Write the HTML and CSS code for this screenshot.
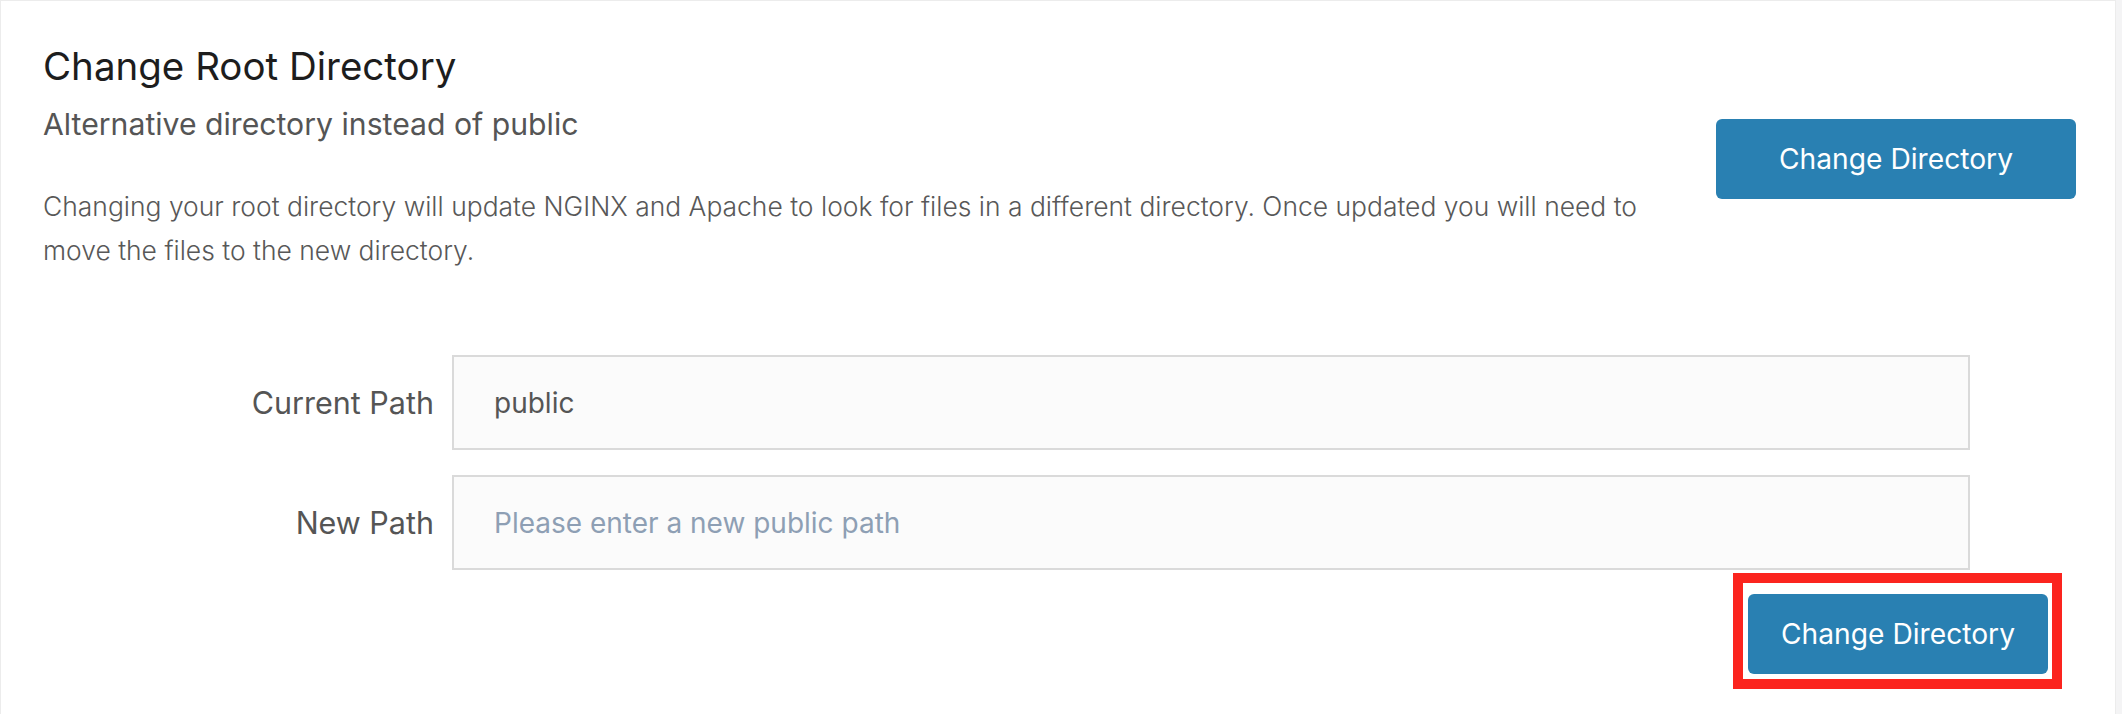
FILE: index.html
```html
<!DOCTYPE html>
<html lang="en">
<head>
<meta charset="utf-8">
<title>Change Root Directory</title>
<link rel="stylesheet" href="styles.css">
</head>
<body>
<div class="card">
  <section class="intro">
    <div class="intro-text">
      <h2 class="title">Change Root Directory</h2>
      <p class="subtitle">Alternative directory instead of public</p>
      <p class="desc">Changing your root directory will update NGINX and Apache to look for files in a different directory. Once updated you will need to move the files to the new directory.</p>
    </div>
    <button class="btn btn-top" type="button">Change Directory</button>
  </section>
  <form class="form">
    <div class="field">
      <label class="label" for="cur">Current Path</label>
      <input class="input" id="cur" type="text" value="public" readonly>
    </div>
    <div class="field">
      <label class="label" for="new">New Path</label>
      <input class="input" id="new" type="text" placeholder="Please enter a new public path">
    </div>
    <div class="actions">
      <button class="btn btn-submit highlighted" type="button">Change Directory</button>
    </div>
  </form>
</div>
</body>
</html>
```

FILE: styles.css
```css
html, body {
  margin: 0;
  padding: 0;
}
body {
  background: #f4f4f5;
  font-family: Inter, "Noto Sans", sans-serif;
  height: 714px;
  overflow: hidden;
}
.card {
  box-sizing: border-box;
  width: 2116px;
  min-height: 714px;
  background: #ffffff;
  border: 1px solid #ececec;
  border-bottom: none;
  padding: 42px 39px 0 42px;
}
.intro {
  display: flex;
  align-items: center;
  justify-content: space-between;
}
.intro-text {
  width: 1660px;
}
.title {
  margin: 0;
  font-size: 38.5px;
  line-height: 46px;
  font-weight: 400;
  color: #1d1d1d;
}
.subtitle {
  margin: 17px 0 0;
  font-size: 30.2px;
  line-height: 36px;
  font-weight: 400;
  color: #555555;
}
.desc {
  margin: 42px 0 0;
  font-size: 26.45px;
  line-height: 44px;
  font-weight: 300;
  color: #585858;
}
.btn {
  box-sizing: border-box;
  height: 80px;
  border: none;
  border-radius: 6px;
  background: #2980b2;
  color: #ffffff;
  font-family: Inter, "Noto Sans", sans-serif;
  font-size: 28.2px;
  font-weight: 400;
  cursor: pointer;
}
.btn-top {
  width: 360px;
  margin-top: 2px;
}
.form {
  margin-top: 83px;
}
.field {
  display: grid;
  grid-template-columns: 391px 1518px;
  column-gap: 18px;
  align-items: center;
  margin-bottom: 25px;
}
.label {
  text-align: right;
  font-size: 30.5px;
  font-weight: 400;
  color: #555555;
}
.input {
  box-sizing: border-box;
  width: 1518px;
  height: 95px;
  border: 2px solid #dadada;
  background: #fbfbfb;
  padding: 0 40px;
  font-family: Inter, "Noto Sans", sans-serif;
  font-size: 28px;
  color: #555555;
  outline: none;
}
.input::placeholder {
  color: #8e9fb4;
}
.actions {
  display: flex;
  justify-content: flex-end;
  padding-right: 28px;
  margin-top: -1px;
}
.btn-submit {
  width: 300px;
}
.highlighted {
  position: relative;
}
.highlighted::after {
  content: "";
  position: absolute;
  top: -21px;
  right: -14px;
  bottom: -15px;
  left: -15px;
  border: 10px solid #fb241e;
  pointer-events: none;
}
```
